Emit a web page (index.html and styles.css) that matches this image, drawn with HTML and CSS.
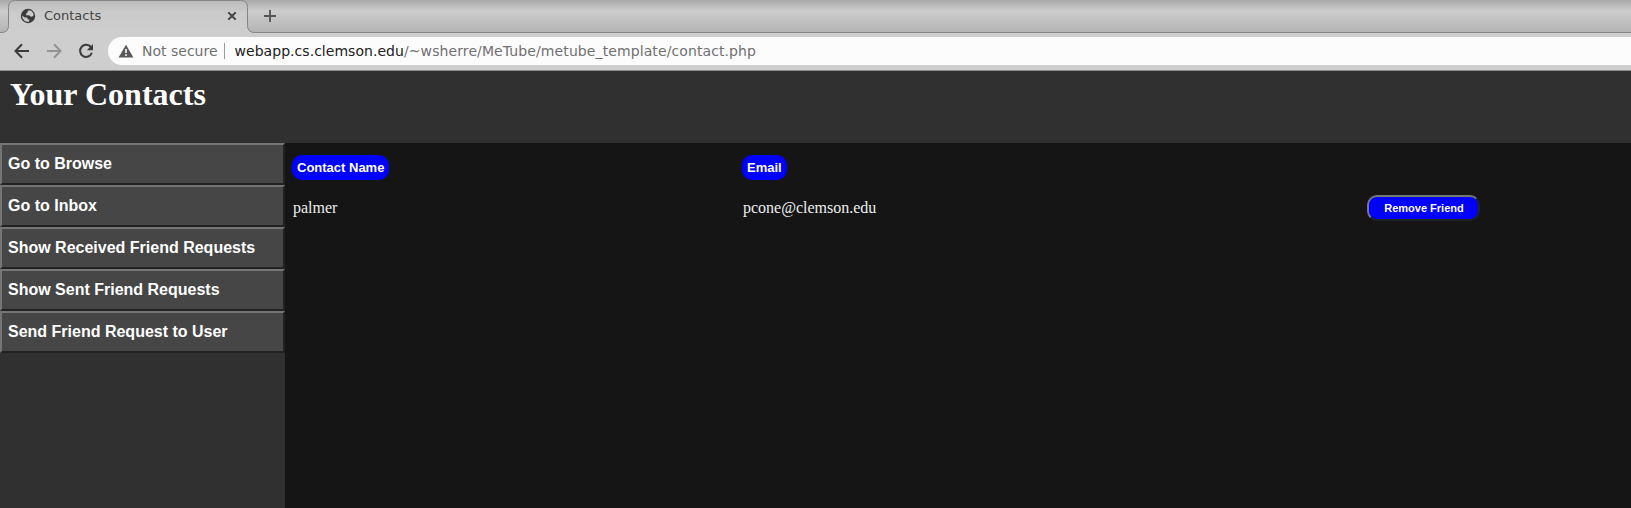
FILE: index.html
```html
<!DOCTYPE html>
<html lang="en">
<head>
<meta charset="utf-8">
<title>Contacts</title>
<link rel="stylesheet" href="styles.css">
</head>
<body>
<div class="tabstrip">
  <svg class="tab-shape" width="260" height="33" viewBox="0 0 260 33">
    <defs><linearGradient id="tabfill" x1="0" y1="0" x2="0" y2="1"><stop offset="0" stop-color="#bcbcbc"/><stop offset=".4" stop-color="#cbcbcb"/><stop offset="1" stop-color="#cecece"/></linearGradient></defs>
    <path d="M0 33V32.5H1.500Q8.500 32.500 8.500 25.500V7.500Q8.500 .5 15.500 .5H240.500Q247.500 .5 247.500 7.500V25.500Q247.500 32.500 254.500 32.500V33Z" fill="url(#tabfill)"/>
    <path d="M0 32.500H1.500Q8.500 32.500 8.500 25.500V7.500Q8.500 .5 15.500 .5H240.500Q247.500 .5 247.500 7.500V25.500Q247.500 32.500 254.500 32.500H260" fill="none" stroke="#858585"/>
  </svg>
  <div class="tab">
    <svg class="globe" width="16" height="16" viewBox="0 0 16 16"><circle cx="8" cy="8" r="7.200" fill="#393b3d"/><path d="M8.900 2.200 7.400 3.500 7.500 4.700 5.900 5.700 6.200 7.300 9.100 7.200 10.500 8.500 12 8.700 13.700 7.200A5.800 5.800 0 0 0 8.900 2.200ZM2.200 7.400 4.800 9.500 7.200 9.600 7.600 11.200 9.500 11.500 8.900 13.700A5.800 5.800 0 0 1 2.200 7.400Z" fill="#cbcbcb"/></svg>
    <span class="tab-title">Contacts</span>
    <svg width="10" height="10" viewBox="0 0 10 10"><path d="M1.300 1.300 8.700 8.700M8.700 1.300 1.300 8.700" stroke="#3c3c3c" stroke-width="1.900"/></svg>
  </div>
  <svg class="plus" width="14" height="14" viewBox="0 0 14 14"><path d="M7 1V13M1 7H13" stroke="#555" stroke-width="1.900"/></svg>
</div>
<div class="toolbar">
  <svg width="16" height="16" viewBox="0 0 16 16"><path d="M15 8H2.500M8 1.300 1.500 8 8 14.700" fill="none" stroke="#3a3c3e" stroke-width="2"/></svg>
  <svg width="16" height="16" viewBox="0 0 16 16"><path d="M1 8H13.500M8 1.300 14.500 8 8 14.700" fill="none" stroke="#939393" stroke-width="2"/></svg>
  <svg width="16" height="16" viewBox="0 0 16 16"><path d="M13 4.400A6 6 0 1 0 13.800 9.700" fill="none" stroke="#3a3c3e" stroke-width="2"/><path d="M15 1V7.200H8.800Z" fill="#3a3c3e"/></svg>
  <div class="address">
    <svg width="16" height="14" viewBox="0 0 16 14"><path d="M8 .7 15.400 13.500H.6Z" fill="#58595b"/><path d="M8 5V9M8 10.200V12" stroke="#fff" stroke-width="1.600"/></svg>
    <span class="security">Not secure</span>
    <span class="divider"></span>
    <span class="url"><span class="host">webapp.cs.clemson.edu</span>/~wsherre/MeTube/metube_template/contact.php</span>
  </div>
</div>
<header class="page-header"><h1>Your Contacts</h1></header>
<div class="page-body">
  <nav class="sidebar">
    <button>Go to Browse</button>
    <button>Go to Inbox</button>
    <button>Show Received Friend Requests</button>
    <button>Show Sent Friend Requests</button>
    <button>Send Friend Request to User</button>
  </nav>
  <main class="contacts">
    <div class="row head"><span class="label">Contact Name</span><span class="label">Email</span></div>
    <div class="row"><span class="cell">palmer</span><span class="cell">pcone@clemson.edu</span><button class="remove">Remove Friend</button></div>
  </main>
</div>
</body>
</html>
```
FILE: styles.css
```css
* { box-sizing: border-box; }
body {
  margin: 0;
  height: 508px;
  display: flex;
  flex-direction: column;
  overflow: hidden;
  background: #151515;
  color: #fff;
  font-family: "Liberation Serif", serif;
}
svg { display: block; flex: none; }
.tabstrip {
  position: relative;
  flex: none;
  height: 33px;
  display: flex;
  align-items: flex-start;
  background: linear-gradient(#a9a9a9, #cccccc 11px, #c6c6c6 16px, #b5b5b5 32px);
  border-bottom: 1px solid #858585;
  font-family: "DejaVu Sans", sans-serif;
}
.tab-shape { position: absolute; left: 0; top: 0; }
.tab {
  position: relative;
  width: 248px;
  height: 32px;
  padding: 0 11px 0 20px;
  display: flex;
  align-items: center;
}
.tab-title { flex: 1; margin-left: 8px; font-size: 13px; line-height: 16px; color: #444; }
.plus { position: relative; margin: 9px 0 0 15px; }
.toolbar {
  flex: none;
  height: 38px;
  padding: 4px 0 5px 14px;
  display: flex;
  align-items: center;
  gap: 16px;
  background: #cecece;
  border-bottom: 1px solid #8b8d8b;
  font-family: "DejaVu Sans", sans-serif;
}
.address {
  flex: 1;
  height: 28px;
  margin-left: -2px;
  padding-left: 10px;
  display: flex;
  align-items: center;
  background: #fcfcfc;
  border-radius: 14px 0 0 14px;
  font-size: 14px;
  white-space: nowrap;
  color: #707070;
}
.security { margin-left: 8px; }
.divider { width: 1px; height: 16px; margin: 0 10px 0 6px; background: #999; }
.url { letter-spacing: 0.1px; }
.host { color: #202020; letter-spacing: 0.04px; }
.page-header { flex: none; height: 72px; padding: 5px 10px; background: #303030; }
h1 { margin: 0; font-size: 32px; line-height: 37px; }
.page-body { flex: 1; display: flex; }
.sidebar { width: 285px; display: flex; flex-direction: column; background: #303030; }
button, .label { font-family: "Liberation Sans", Arial, sans-serif; font-weight: bold; color: #fff; }
.sidebar button {
  height: 42px;
  padding: 0 6px;
  background: #464646;
  border: 2px solid;
  border-color: #757575 #222 #222 #757575;
  font-size: 16px;
  text-align: left;
}
.contacts { flex: 1; padding: 12px 0 0 8px; }
.row { display: grid; grid-template-columns: 450px 624px auto; justify-items: start; align-items: center; }
.head { height: 25px; margin: 0 0 15px -1px; }
.label { height: 25px; padding: 0 5px; border-radius: 10px; background: #00f; font-size: 13px; line-height: 25px; }
.cell { font-size: 16px; line-height: 24px; color: #eee; }
.remove {
  width: 113px;
  height: 26px;
  padding: 0 0 0 1px;
  background: #00f;
  border: 2px solid;
  border-color: #777 #222 #222 #777;
  border-radius: 10px;
  font-size: 11px;
}
```
